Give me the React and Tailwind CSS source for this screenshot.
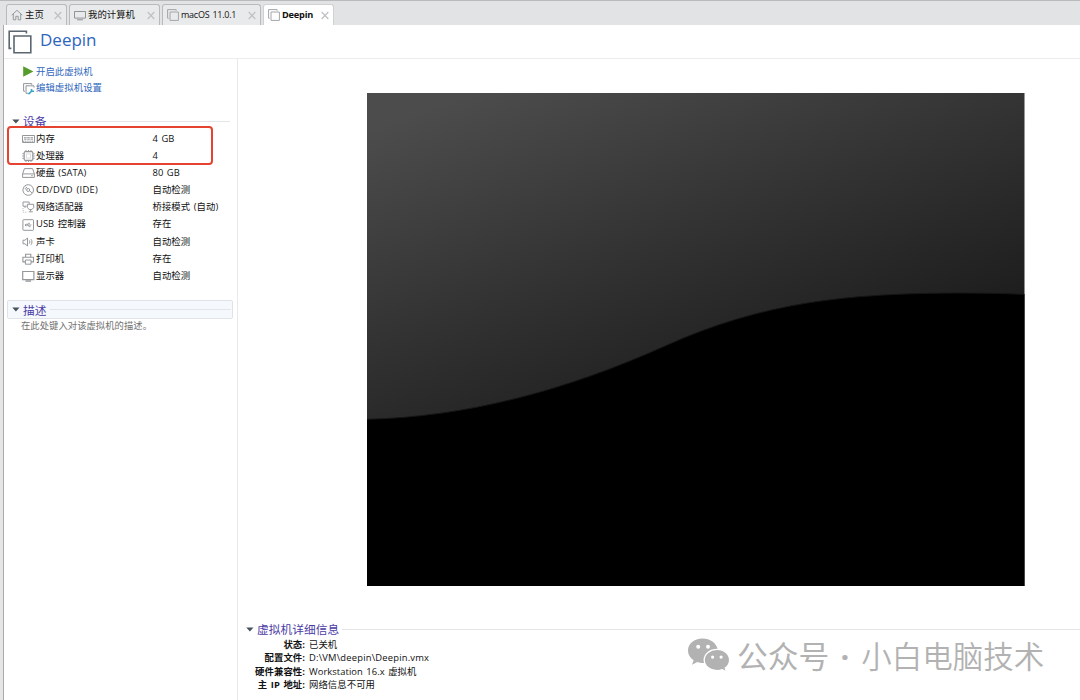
import { clsx } from 'clsx';

const ICON = {
  fill: 'none',
  stroke: 'currentColor',
  strokeWidth: 1,
};

function HomeIcon() {
  return (
    <svg width="12" height="12" viewBox="0 0 12 12" className="text-[#959a9d]" {...ICON}>
      <path d="M.7 6.2 6 1.3l5.3 4.9M2.3 5v5.8h2.5V7.3h2.4v3.5h2.5V5" />
    </svg>
  );
}

function MonitorIcon() {
  return (
    <svg width="12" height="12" viewBox="0 0 12 12" className="text-[#8f9497]" {...ICON}>
      <path d="M.5 2.5h11v6.6H.5zM3 10.8h6" />
    </svg>
  );
}

function VmIcon({ size = 12, className = 'text-[#a2a6a9]', strokeWidth = 1 }) {
  return (
    <svg width={size} height={size} viewBox="0 0 12 12" className={className} {...ICON} strokeWidth={strokeWidth}>
      <path d="M1.7 9.2H.6V.6h8.6v1.1M3 3h8.4v8.4H3z" />
    </svg>
  );
}

function Caret() {
  return (
    <svg width="8" height="5" viewBox="0 0 8 5" className="shrink-0">
      <path d="M.3.5h7.2L3.9 4.5z" fill="#46525c" />
    </svg>
  );
}

const DEVICE_ICONS = {
  memory: (
    <>
      <path d="M.5 2.5h12v7H.5z" />
      <path d="M2 4.7h2.6M5.2 4.7h2.6M8.5 4.7H11M2 6.2h2.6M5.2 6.2h2.6M8.5 6.2H11" />
      <path d="M1 8.2h11" strokeDasharray="1.2 .6" />
    </>
  ),
  cpu: (
    <>
      <rect x="2.2" y="1.7" width="8.6" height="8.6" rx="1" strokeWidth="1.2" />
      <path d="M4.4 3.9h4.2v4.2H4.4z" opacity=".35" />
      <path d="M4 0v1.5M6.5 0v1.5M9 0v1.5M4 10.5V12M6.5 10.5V12M9 10.5V12M.3 3.8h1.5M.3 6h1.5M.3 8.3h1.5M11.2 3.8h1.5M11.2 6h1.5M11.2 8.3h1.5" />
    </>
  ),
  disk: (
    <>
      <path d="M.6 6.9 2.4 1.6h8.2l1.8 5.3v3.5H.6zM.6 6.9h11.8" />
      <path d="M9.2 8.7h1.5" />
    </>
  ),
  cd: (
    <>
      <circle cx="6.2" cy="6" r="5.3" />
      <circle cx="6.2" cy="6" r="1.5" />
      <path d="M2.7 4.4 4.3 5.2M3.8 2.7l1.2 1.6M8 7.2l1.9 1.7" />
    </>
  ),
  network: (
    <>
      <path d="M4.6 5.2H1V1h6.2v1.8M3 5.4v1.5" />
      <path d="M5.3 3.3h6.4v3.4l-1.8 1.8H7.2L5.3 6.7zM8.6 8.5v1.9M6.8 10.8h4" />
      <path d="M1 7v4.2h4" strokeDasharray="1 1" opacity=".7" />
    </>
  ),
  usb: (
    <>
      <rect x=".9" y=".7" width="10.6" height="10.6" rx=".6" />
      <path d="M3.2 6h6.2M5 6l1.3-1.7h1.5M5.8 6l1.3 1.7h1.4M4.4 4.9 3 6l1.4 1.1" />
    </>
  ),
  sound: <path d="M1 4.2h2L5.5 2v8L3 7.8H1zM7.3 4.4c.7.9.7 2.3 0 3.2M9 3.2c1.3 1.6 1.3 4 0 5.6" />,
  printer: (
    <>
      <path d="M3.6 4.2V1.3h5.2v2.9M3.4 8.9H.9V4.3h10.6v4.6H9" strokeWidth="1.1" />
      <path d="M3.4 7H9v4.2H3.4z" />
    </>
  ),
  display: <path d="M.7 1.5h11.2v8.2H.7zM3.5 11.2h5.6" strokeWidth="1.2" />,
};

const TABS = [
  { label: '主页', icon: <HomeIcon />, width: 'w-[61px]' },
  { label: '我的计算机', icon: <MonitorIcon />, width: 'w-[91px]' },
  { label: 'macOS 11.0.1', icon: <VmIcon />, width: 'w-[99px]', text: 'text-[9px] tracking-[-0.25px] [word-spacing:1px]' },
  { label: 'Deepin', icon: <VmIcon />, width: 'w-[71px]', text: 'text-[9.2px] tracking-[-0.2px]', active: true },
];

const DEVICES = [
  { icon: 'memory', name: '内存', value: '4 GB' },
  { icon: 'cpu', name: '处理器', value: '4' },
  { icon: 'disk', name: '硬盘 (SATA)', value: '80 GB' },
  { icon: 'cd', name: 'CD/DVD (IDE)', value: '自动检测', text: 'tracking-[0.25px]' },
  { icon: 'network', name: '网络适配器', value: '桥接模式 (自动)' },
  { icon: 'usb', name: 'USB 控制器', value: '存在' },
  { icon: 'sound', name: '声卡', value: '自动检测' },
  { icon: 'printer', name: '打印机', value: '存在' },
  { icon: 'display', name: '显示器', value: '自动检测' },
];

const DETAILS = [
  { label: '状态:', value: '已关机' },
  { label: '配置文件:', value: 'D:\\VM\\deepin\\Deepin.vmx', text: 'tracking-[0.2px]' },
  { label: '硬件兼容性:', value: 'Workstation 16.x 虚拟机' },
  { label: '主 IP 地址:', value: '网络信息不可用' },
];

function Tab({ tab }) {
  return (
    <div
      className={clsx(
        'flex h-[21px] items-center rounded-t-[3px] border border-b-0 pl-1 pr-1',
        tab.width,
        tab.active ? 'border-[#d0d1d2] bg-white font-bold' : 'border-[#b9babb] bg-[#e9eaeb]',
      )}
    >
      {tab.icon}
      <span className={clsx('ml-[2px] flex-1', tab.text)}>{tab.label}</span>
      <svg width="8" height="9" viewBox="0 0 8 9" className="text-[#c0c2c4]" {...ICON} strokeWidth="1.3">
        <path d="m.7 1 6.6 7M7.3 1 .7 8" />
      </svg>
    </div>
  );
}

function SectionTitle({ children }) {
  return (
    <div className="flex items-center">
      <Caret />
      <h2 className="ml-[3px] mr-[3px] text-[11.7px] leading-[18px] text-[#4b3ba5]">{children}</h2>
      <div className="h-px flex-1 bg-[#e4e5e7]" />
    </div>
  );
}

function Sidebar() {
  return (
    <aside className="w-[234px] shrink-0 border-r border-[#e9e9ea]">
      <div className="ml-[19px] mt-[5px] text-[#2f66bd]">
        <div className="flex h-4 items-center gap-[2px]">
          <svg width="11" height="12" viewBox="0 0 11 12">
            <path d="M.2.3 10.4 5.5 .2 10.7z" fill="#559c2b" />
          </svg>
          开启此虚拟机
        </div>
        <div className="flex h-[17px] items-center gap-[1px]">
          <svg width="12" height="12" viewBox="0 0 12 12" className="text-[#90959a]" {...ICON}>
            <path d="M2 8.2H.6V.6h8.2v1.3M5.6 10.3H3V2.8h8v1.8" />
            <path d="m5.5 11.2 3.6-3.6M8.5 5.9v2.3H11" stroke="#39a5ca" strokeWidth="1.6" />
          </svg>
          编辑虚拟机设置
        </div>
      </div>

      <div className="ml-2 mr-[7px] mt-[15px]">
        <SectionTitle>设备</SectionTitle>
      </div>
      <div className="relative pt-[0.5px]">
        {DEVICES.map((device) => (
          <div key={device.icon} className="flex h-[17.1px] items-center">
            <svg width="13" height="12" viewBox="0 0 13 12" className="ml-[18px] mr-[1px] text-[#94989b]" {...ICON}>
              {DEVICE_ICONS[device.icon]}
            </svg>
            <span className={clsx('w-[116.5px]', device.text)}>{device.name}</span>
            <span>{device.value}</span>
          </div>
        ))}
        {/* Highlight over the memory and processor rows */}
        <div className="absolute -top-[4px] left-[3px] h-[39px] w-[206px] rounded-[4px] border-2 border-[#e5422f]" />
      </div>

      <div className="ml-[3px] mr-1 mt-[15.5px] rounded-[2px] border border-[#dfe3e8] bg-[#f5f8fc] pl-1 pr-px">
        <div className="-mb-px">
          <SectionTitle>描述</SectionTitle>
        </div>
      </div>
      <p className="ml-[17px] text-[9.3px] leading-[14px] text-[#717171]">在此处键入对该虚拟机的描述。</p>
    </aside>
  );
}

function Screen() {
  return (
    <svg width="658" height="493" viewBox="0 0 658 493" className="ml-[129px] mt-[34px] block">
      <defs>
        <linearGradient id="shade" gradientUnits="userSpaceOnUse" x1="50" y1="20" x2="185" y2="395">
          <stop offset="0" stopColor="#4c4c4c" />
          <stop offset=".5" stopColor="#333" />
          <stop offset="1" stopColor="#1b1b1b" />
        </linearGradient>
      </defs>
      <rect width="657.5" height="493" fill="url(#shade)" />
      <path
        d="M0 326.3C100 324 200 297 298 253S480 200 598 200Q630 200 657.5 201.4V493H0z"
        fill="#000"
      />
      <path d="M0 326.3C100 324 200 297 298 253S480 200 598 200Q630 200 657.5 201.4" fill="none" stroke="#151515" />
    </svg>
  );
}

function Watermark() {
  return (
    <div className="absolute left-[687px] top-[634px] flex text-[#b2b2b2]">
      <svg width="43" height="40" viewBox="0 0 43 40">
        <path
          d="M15.5 4.5C7.2 4.5 1 9.7 1 16.6c0 4.1 2 7.4 5.6 9.7L5 30.8l5.4-2.7c2 .7 4.2 1 6.4.8l6-3 7.9-10.7C29.4 9 23 4.5 15.5 4.5z"
          fill="currentColor"
        />
        <path
          d="M30 15.3c-7.1 0-12.8 4.8-12.8 10.7S22.9 36.7 30 36.7c1.9 0 3.7-.3 5.2-1l4.1 2.2-1-3.8c2.7-2 4.3-4.8 4.3-8.1 0-5.9-5.4-10.7-12.6-10.7z"
          fill="currentColor"
          stroke="#fff"
          strokeWidth="1.3"
        />
        <g fill="#fff">
          <circle cx="11.2" cy="12.7" r="2" />
          <circle cx="21" cy="12.7" r="2" />
          <circle cx="25.6" cy="23.1" r="1.6" />
          <circle cx="34.1" cy="23.1" r="1.6" />
        </g>
      </svg>
      <span className="ml-[7px] text-[30.8px] leading-[45px]">公众号</span>
      <span className="ml-[11px] text-[30.8px] font-bold leading-[45px]">·</span>
      <span className="ml-[12px] text-[30.5px] font-[350] leading-[45px]">小白电脑技术</span>
    </div>
  );
}

export default function App() {
  return (
    <div className="relative flex h-[700px] w-[1080px] flex-col overflow-hidden whitespace-nowrap bg-white font-['Open_Sans','Noto_Sans_CJK_SC',sans-serif] text-[9.4px] text-[#111]">
      <nav className="flex h-[25px] shrink-0 items-end gap-[2px] border-t border-[#b9babb] bg-[#e2e3e5] pl-[6px]">
        {TABS.map((tab) => (
          <Tab key={tab.label} tab={tab} />
        ))}
      </nav>

      <div className="flex flex-1 flex-col border-l-[3px] border-[#e5e5e6]">
        <div className="flex flex-1 flex-col border-l border-[#aaabac]">
          <header className="flex h-[34px] shrink-0 items-center gap-[8px] border-b border-[#ececec] pl-1">
            <VmIcon size={24} className="text-[#5b6670]" strokeWidth={0.8} />
            <h1 className="pb-[3px] text-[17px] leading-7 text-[#2d65c0]">Deepin</h1>
          </header>

          <div className="flex flex-1 tracking-[0.06px] [word-spacing:1px]">
            <Sidebar />
            <main className="flex-1">
              <Screen />
              <div className="ml-2 mt-[34px]">
                <SectionTitle>虚拟机详细信息</SectionTitle>
                <dl>
                  {DETAILS.map((item) => (
                    <div key={item.label} className="flex h-[13.3px] items-center leading-[13.3px]">
                      <dt className="w-[59px] text-right font-bold">{item.label}</dt>
                      <dd className={clsx('ml-1', item.text)}>{item.value}</dd>
                    </div>
                  ))}
                </dl>
              </div>
            </main>
          </div>
        </div>
      </div>

      <Watermark />
    </div>
  );
}
